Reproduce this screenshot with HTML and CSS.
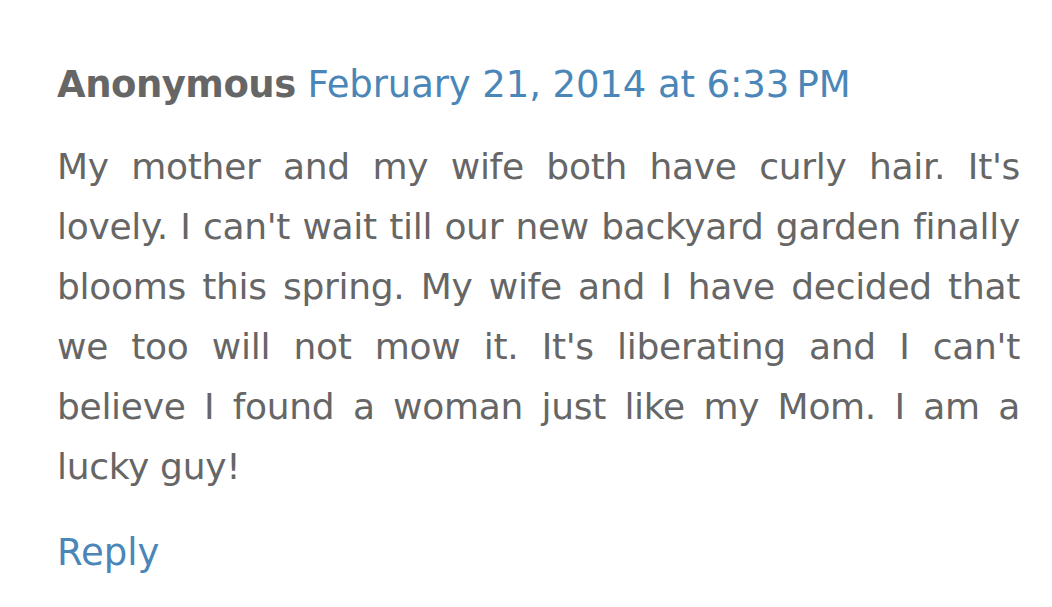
FILE: index.html
```html
<!DOCTYPE html>
<html>
<head>
<meta charset="utf-8">
<link rel="stylesheet" href="styles.css">
</head>
<body>
<div class="comment">
  <div class="head"><span class="author">Anonymous</span> <a class="date" href="#">February 21, 2014 at 6:33&#8239;PM</a></div>
  <p class="body">My mother and my wife both have curly hair. It's lovely. I can't wait till our new backyard garden finally blooms this spring. My wife and I have decided that we too will not mow it. It's liberating and I can't believe I found a woman just like my Mom. I am a lucky guy!</p>
  <a class="reply" href="#">Reply</a>
</div>
</body>
</html>
```
FILE: styles.css
```css
html, body { margin: 0; padding: 0; background: #fff; }
body { font-family: "DejaVu Sans", Verdana, sans-serif; }
.comment { padding: 60px 32px 0 57px; display: flex; flex-direction: column; align-items: flex-start; }
.head { font-size: 37px; line-height: 50px; white-space: nowrap; }
.author { color: #666; font-weight: bold; letter-spacing: -0.5px; }
.date { color: #4a86b8; text-decoration: none; letter-spacing: -0.1px; }
.body { margin: 27px 0 0 0; font-size: 36px; line-height: 60px; color: #666; text-align: justify; width: 963px; letter-spacing: -0.3px; }
.reply { margin-top: 34px; font-size: 37px; color: #4a86b8; text-decoration: none; }
```
